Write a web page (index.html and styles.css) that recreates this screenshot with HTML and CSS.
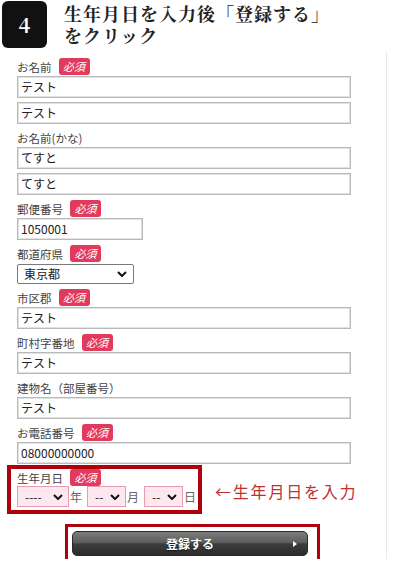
FILE: index.html
```html
<!DOCTYPE html>
<html lang="ja">
<head>
<meta charset="utf-8">
<link rel="stylesheet" href="styles.css">
</head>
<body>
<header class="step">
  <div class="step-num">4</div>
  <h1 class="step-title">生年月日を入力後「登録する」<br>をクリック</h1>
</header>
<div class="form">
  <div class="field first">
    <div class="label-row"><span class="label">お名前</span><span class="badge">必須</span></div>
    <div class="input">テスト</div>
    <div class="input">テスト</div>
  </div>
  <div class="field">
    <div class="label-row"><span class="label">お名前(かな)</span></div>
    <div class="input">てすと</div>
    <div class="input">てすと</div>
  </div>
  <div class="field">
    <div class="label-row"><span class="label">郵便番号</span><span class="badge">必須</span></div>
    <div class="input zip">1050001</div>
  </div>
  <div class="field">
    <div class="label-row"><span class="label">都道府県</span><span class="badge">必須</span></div>
    <div class="select pref"><span>東京都</span><svg class="chev" viewBox="0 0 10 6" width="10" height="6"><polyline points="1,1 5,5 9,1" fill="none" stroke="#111" stroke-width="2"/></svg></div>
  </div>
  <div class="field">
    <div class="label-row"><span class="label">市区郡</span><span class="badge">必須</span></div>
    <div class="input">テスト</div>
  </div>
  <div class="field">
    <div class="label-row"><span class="label">町村字番地</span><span class="badge">必須</span></div>
    <div class="input">テスト</div>
  </div>
  <div class="field">
    <div class="label-row"><span class="label">建物名（部屋番号）</span></div>
    <div class="input">テスト</div>
  </div>
  <div class="field">
    <div class="label-row"><span class="label">お電話番号</span><span class="badge">必須</span></div>
    <div class="input">08000000000</div>
  </div>
  <div class="birth-row">
    <div class="mark birth-box">
      <div class="label-row"><span class="label">生年月日</span><span class="badge">必須</span></div>
      <div class="date-row">
        <div class="select pink y"><span>----</span><svg class="chev" viewBox="0 0 10 6" width="10" height="6"><polyline points="1,1 5,5 9,1" fill="none" stroke="#111" stroke-width="2"/></svg></div>
        <span class="unit">年</span>
        <div class="select pink md"><span>--</span><svg class="chev" viewBox="0 0 10 6" width="10" height="6"><polyline points="1,1 5,5 9,1" fill="none" stroke="#111" stroke-width="2"/></svg></div>
        <span class="unit">月</span>
        <div class="select pink md"><span>--</span><svg class="chev" viewBox="0 0 10 6" width="10" height="6"><polyline points="1,1 5,5 9,1" fill="none" stroke="#111" stroke-width="2"/></svg></div>
        <span class="unit">日</span>
      </div>
    </div>
    <p class="note">←生年月日を入力</p>
  </div>
  <div class="mark submit-box">
    <div class="submit"><span>登録する</span><span class="tri"></span></div>
  </div>
</div>
</body>
</html>
```
FILE: styles.css
```css
* { box-sizing: border-box; }
html, body { margin: 0; padding: 0; background: #fff; }
body {
  width: 396px;
  font-family: "Noto Sans CJK JP", "Noto Sans", sans-serif;
  color: #333;
}
.step {
  display: flex;
  align-items: flex-start;
  height: 52px;
}
.step-num {
  margin: 1px 0 0 2px;
  width: 45px;
  height: 47px;
  border-radius: 6px;
  background: #111;
  color: #fff;
  font-family: "Noto Serif CJK JP", "Liberation Serif", serif;
  font-weight: bold;
  font-size: 20px;
  line-height: 1;
  display: flex;
  align-items: center;
  justify-content: center;
}
.step-title {
  margin: 2px 0 0 17px;
  font-family: "Noto Serif CJK JP", "Noto Sans CJK JP", serif;
  font-weight: bold;
  font-size: 18px;
  line-height: 22px;
  letter-spacing: 1px;
  color: #222;
}
.form {
  width: 387px;
  border-right: 1px solid #e8e8e8;
  padding: 5px 0 0 17px;
}
.field { margin-top: 4px; }
.field.first { margin-top: 0; }
.label-row {
  display: flex;
  align-items: center;
  gap: 7px;
  height: 19px;
}
.label {
  font-size: 11.5px;
  line-height: 14px;
  color: #444;
}
.badge {
  display: inline-flex;
  align-items: center;
  justify-content: center;
  width: 31px;
  height: 17px;
  border-radius: 3px;
  background: #e23a5c;
  color: #fff;
  font-size: 11px;
  line-height: 1;
  font-style: italic;
}
.input {
  width: 334px;
  height: 22px;
  border: 1px solid #b9b9b9;
  box-shadow: inset 0 0 0 1px #e2e2e2;
  padding: 0 0 0 3px;
  font-size: 12px;
  line-height: 20px;
  color: #222;
  background: #fff;
}
.input + .input { margin-top: 4px; }
.input.zip { width: 126px; }
.select {
  display: flex;
  align-items: center;
  justify-content: space-between;
  height: 20px;
  border: 1px solid #7a7a7a;
  border-radius: 2px;
  font-size: 12px;
  line-height: 1;
  color: #222;
  background: #fff;
}
.select.pref {
  width: 117px;
  padding: 0 6px 0 6px;
  margin: 1px 0;
}
.birth-row {
  display: flex;
  align-items: flex-end;
  margin: 1px 0 0 -10px;
}
.mark { border: 4px solid #b0000c; }
.birth-box {
  width: 195px;
  padding: 0 0 3px 6px;
}
.birth-box .label-row { height: 17px; }
.date-row {
  display: flex;
  align-items: center;
}
.select.pink {
  height: 21px;
  background: #fde8ef;
  border: 1px solid #e89aae;
  border-radius: 0;
  padding: 0 5px 0 7px;
}
.select.y { width: 52px; }
.select.md { width: 39px; }
.unit {
  font-size: 12px;
  color: #666;
  margin: 0 5px 0 1px;
}
.unit:last-child { margin-right: 0; }
.note {
  margin: 0 0 13px 13px;
  font-size: 16px;
  letter-spacing: 1.8px;
  color: #c03030;
  line-height: 20px;
}
.submit-box {
  width: 255px;
  margin: 10px 0 -8px 48px;
  border-width: 3px;
  padding: 4px 9px 8px 4px;
}
.submit {
  position: relative;
  height: 25px;
  border-radius: 5px;
  border: 1px solid #2a2a2a;
  background: linear-gradient(#7c7c7c 0%, #5e5e5e 45%, #3c3c3c 52%, #2c2c2c 100%);
  display: flex;
  align-items: center;
  justify-content: center;
  color: #fff;
  font-size: 12px;
  font-weight: bold;
  text-shadow: 0 1px 1px rgba(0,0,0,0.6);
}
.tri {
  position: absolute;
  right: 10px;
  top: 9px;
  width: 0;
  height: 0;
  border-left: 4px solid #fff;
  border-top: 3px solid transparent;
  border-bottom: 3px solid transparent;
}
```
